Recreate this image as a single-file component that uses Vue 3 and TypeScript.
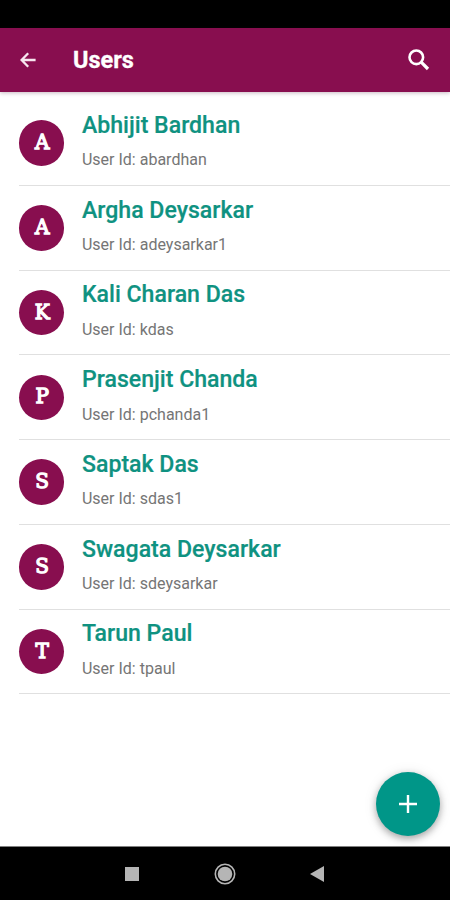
<script setup lang="ts">
interface User {
  name: string
  id: string
}

const users: User[] = [
  { name: 'Abhijit Bardhan', id: 'abardhan' },
  { name: 'Argha Deysarkar', id: 'adeysarkar1' },
  { name: 'Kali Charan Das', id: 'kdas' },
  { name: 'Prasenjit Chanda', id: 'pchanda1' },
  { name: 'Saptak Das', id: 'sdas1' },
  { name: 'Swagata Deysarkar', id: 'sdeysarkar' },
  { name: 'Tarun Paul', id: 'tpaul' },
]
</script>

<template>
  <div class="screen">
    <div class="status-bar"></div>
    <header class="app-bar">
      <button class="icon-btn" aria-label="Back">
        <svg width="16" height="16" viewBox="0 0 16 16" fill="none" stroke="#f7e6ef" stroke-width="2.3">
          <path d="M15.6 8H2M8.2 1.3L1.6 8l6.6 6.7" />
        </svg>
      </button>
      <h1 class="title">Users</h1>
      <button class="icon-btn search" aria-label="Search">
        <svg width="22" height="22" viewBox="0 0 22 22" fill="none" stroke="#fff">
          <circle cx="8.3" cy="8.3" r="6.8" stroke-width="2.6" />
          <path d="M13.2 13.2l6.8 6.8" stroke-width="3.2" />
        </svg>
      </button>
    </header>

    <main class="content">
      <ul class="list">
        <li v-for="user in users" :key="user.id" class="row">
          <span class="avatar">{{ user.name.charAt(0) }}</span>
          <div class="info">
            <div class="name">{{ user.name }}</div>
            <div class="user-id">User Id: {{ user.id }}</div>
          </div>
        </li>
      </ul>
      <button class="fab" aria-label="Add user">
        <svg width="18" height="18" viewBox="0 0 18 18" stroke="#fff" stroke-width="2.4">
          <path d="M9 0v18M0 9h18" />
        </svg>
      </button>
    </main>

    <nav class="nav-bar">
      <svg width="14" height="14" viewBox="0 0 14 14"><rect width="14" height="14" fill="#b5b5b5" /></svg>
      <svg width="22" height="22" viewBox="0 0 22 22">
        <circle cx="11" cy="11" r="9.7" fill="none" stroke="#b5b5b5" stroke-width="1.6" />
        <circle cx="11" cy="11" r="7.3" fill="#b5b5b5" />
      </svg>
      <svg width="14" height="16" viewBox="0 0 14 16"><path d="M14 0v16L0 8z" fill="#b5b5b5" /></svg>
    </nav>
  </div>
</template>

<style scoped>
.screen {
  position: relative;
  display: flex;
  flex-direction: column;
  width: 450px;
  height: 900px;
  overflow: hidden;
  background: #fff;
  font-family: Roboto, "Liberation Sans", sans-serif;
}
.status-bar {
  flex: 0 0 27.5px;
  background: #000;
}
.app-bar {
  flex: 0 0 64.5px;
  box-sizing: border-box;
  display: flex;
  align-items: center;
  padding: 0 20px;
  background: #880e4f;
  box-shadow: 0 1px 4px rgba(60, 0, 35, 0.28);
  z-index: 1;
}
.icon-btn {
  display: flex;
  padding: 0;
  border: 0;
  background: none;
}
.search {
  margin-left: auto;
}
.title {
  margin: 0 0 0 37px;
  color: #fff;
  font-size: 23.5px;
  line-height: 28px;
  font-weight: 700;
  -webkit-text-stroke: 0.3px #fff;
}
.content {
  flex: 1;
  min-height: 0;
  display: flex;
  flex-direction: column;
}
.list {
  list-style: none;
  margin: 0;
  padding: 9.2px 0 0 19px;
}
.row {
  box-sizing: border-box;
  height: 84.75px;
  display: flex;
  align-items: center;
  gap: 17.6px;
  border-bottom: 1.6px solid #e0e0e0;
}
.avatar {
  flex: none;
  box-sizing: border-box;
  display: flex;
  align-items: center;
  justify-content: center;
  width: 45.4px;
  height: 45.4px;
  padding: 0 0 2px 1px;
  border-radius: 50%;
  background: #880e4f;
  color: #fff;
  font-family: "DejaVu Serif", serif;
  font-weight: 400;
  font-size: 20px;
  line-height: 1;
  -webkit-text-stroke: 1.3px #fff;
}
.info {
  display: flex;
  flex-direction: column;
  gap: 10.4px;
  padding-bottom: 3.9px;
}
.name {
  color: #0f9281;
  font-size: 23.1px;
  line-height: 28px;
  font-weight: 500;
  -webkit-text-stroke: 0.2px #0f9281;
}
.user-id {
  color: #757575;
  font-size: 16px;
  line-height: 20px;
}
.fab {
  position: absolute;
  right: 10.5px;
  bottom: 64px;
  width: 64px;
  height: 64px;
  display: flex;
  align-items: center;
  justify-content: center;
  padding: 0;
  border: 0;
  border-radius: 50%;
  background: #009688;
  box-shadow: 0 3px 7px rgba(0, 0, 0, 0.3), 0 1px 14px rgba(0, 0, 0, 0.1);
}
.nav-bar {
  flex: 0 0 54px;
  box-sizing: border-box;
  display: flex;
  align-items: center;
  justify-content: space-between;
  padding: 0 126px 0 125px;
  border-top: 1px solid #808080;
  background: #000;
}
</style>
